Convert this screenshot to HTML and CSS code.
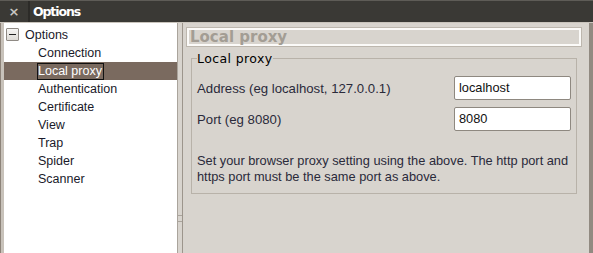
FILE: index.html
```html
<!DOCTYPE html>
<html>
<head>
<meta charset="utf-8">
<link rel="stylesheet" href="styles.css">
</head>
<body>
<div class="window">
  <div class="titlebar">
    <div class="close">×</div>
    <div class="title">Options</div>
  </div>
  <div class="main">
    <div class="tree">
      <div class="root">
        <span class="toggle"></span>
        <span class="root-label">Options</span>
      </div>
      <ul class="items">
        <li>Connection</li>
        <li class="selected"><span>Local proxy</span></li>
        <li>Authentication</li>
        <li>Certificate</li>
        <li>View</li>
        <li>Trap</li>
        <li>Spider</li>
        <li>Scanner</li>
      </ul>
    </div>
    <div class="splitter"><span class="grip"></span></div>
    <div class="panel">
      <div class="panel-header">Local proxy</div>
      <fieldset class="group">
        <legend>Local proxy</legend>
        <div class="row">
          <span class="label">Address (eg localhost, 127.0.0.1)</span>
          <div class="input">localhost</div>
        </div>
        <div class="row">
          <span class="label">Port (eg 8080)</span>
          <div class="input">8080</div>
        </div>
        <p class="note">Set your browser proxy setting using the above. The http port and https port must be the same port as above.</p>
      </fieldset>
    </div>
  </div>
</div>
</body>
</html>
```

FILE: styles.css
```css
* { box-sizing: border-box; }
html, body { margin: 0; padding: 0; }
body {
  width: 593px;
  height: 253px;
  overflow: hidden;
  background: #d8d4ce;
  font-family: "Liberation Sans", Arial, sans-serif;
  font-size: 12px;
  color: #1a1a1a;
}
.window {
  display: flex;
  flex-direction: column;
  height: 253px;
}
.titlebar {
  height: 23px;
  background: #3a3935;
  border-top: 1px solid #5e5c57;
  border-bottom: 1px solid #c9c4bc;
  display: flex;
  align-items: center;
  color: #fff;
}
.close {
  width: 30px;
  height: 21px;
  border-right: 2px solid #2c2b28;
  color: #c8c6c2;
  font-family: "DejaVu Sans", sans-serif;
  font-weight: bold;
  font-size: 13px;
  text-align: center;
  line-height: 21px;
}
.title {
  padding-left: 3px;
  font-family: "DejaVu Sans", sans-serif;
  font-weight: bold;
  font-size: 12.5px;
  letter-spacing: -1.1px;
}
.main {
  flex: 1;
  display: flex;
  background: #d8d4ce;
  border-left: 1px solid #8d8379;
}
.tree {
  width: 176px;
  background: #fff;
  border-left: 3px solid #c8c2ba;
  padding-top: 4px;
}
.root {
  display: flex;
  align-items: center;
  height: 15px;
  padding-left: 2px;
}
.toggle {
  width: 13px;
  height: 13px;
  border: 1px solid #8f8a84;
  background: linear-gradient(#f6f5f3, #dedbd6);
  border-radius: 1px;
  position: relative;
}
.toggle::after {
  content: "";
  position: absolute;
  left: 2px;
  right: 2px;
  top: 5px;
  height: 1px;
  background: #222;
}
.root-label {
  margin-left: 6px;
  color: #1a1a2a;
  font-size: 12.5px;
}
.items {
  list-style: none;
  margin: 2px 0 0;
  padding: 0;
}
.items li {
  height: 18px;
  line-height: 18px;
  padding-left: 34px;
  color: #1a1a2a;
  font-size: 12.5px;
}
.items li.selected {
  background: #7a6a5f;
  color: #fff;
}
.items li.selected span {
  display: inline-block;
  border: 1px solid #111;
  line-height: 15px;
  padding: 0 1px 0 0;
  margin-left: -1px;
}
.splitter {
  width: 6px;
  background: #d8d4ce;
  border-left: 1px solid #aaa49c;
  border-right: 1px solid #9c958c;
  display: flex;
  align-items: flex-end;
}
.grip {
  display: block;
  width: 100%;
  height: 7px;
  margin-bottom: 31px;
  border-top: 1px solid #aaa49c;
  border-bottom: 1px solid #aaa49c;
}
.panel {
  flex: 1;
  padding: 5px 8px 0 4px;
  border-right: 4px solid #918a81;
}
.panel-header {
  height: 18px;
  border: 2px solid #fbfaf8;
  outline: 1px solid #bdb7ae;
  color: #a39d94;
  font-family: "DejaVu Sans", sans-serif;
  font-weight: bold;
  font-size: 15px;
  line-height: 14px;
  padding-left: 1px;
}
.group {
  margin: 5px 0 0 4px;
  border: 1px solid #b8b2a9;
  padding: 10px 5px 5px 5px;
  width: 386px;
  height: 143px;
}
.group legend {
  padding: 0;
  margin-left: 0;
  font-family: "DejaVu Sans", sans-serif;
  font-size: 12.5px;
  letter-spacing: 0.4px;
  color: #000;
}
.row {
  display: flex;
  align-items: center;
  justify-content: space-between;
  height: 24px;
  margin-bottom: 7px;
}
.label {
  color: #2a2a3a;
  font-size: 13.2px;
}
.input {
  width: 117px;
  height: 24px;
  background: #fff;
  border: 1px solid #8e8880;
  border-radius: 2px;
  padding-left: 4px;
  line-height: 22px;
  font-size: 12.8px;
  color: #111;
}
.note {
  margin: 22px 0 0;
  color: #2a2a3a;
  font-size: 12.8px;
  line-height: 16px;
}
```
